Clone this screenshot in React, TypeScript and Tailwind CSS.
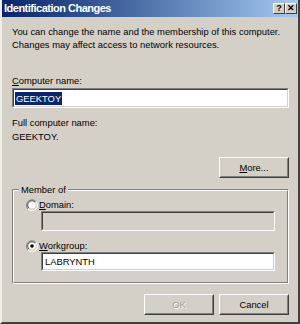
import type { ReactNode } from "react";

const font = { fontFamily: '"Liberation Sans", Arial, sans-serif' };

function Sunken({ children, disabled, className }: { children?: ReactNode; disabled?: boolean; className?: string }) {
  return (
    <div className={`border border-t-[#808080] border-l-[#808080] border-b-white border-r-white ${className ?? ""}`}>
      <div
        className={`h-full border border-t-[#404040] border-l-[#404040] border-b-[#d4d0c8] border-r-[#d4d0c8] flex items-center ${
          disabled ? "bg-[#d4d0c8]" : "bg-white"
        }`}
      >
        {children}
      </div>
    </div>
  );
}

function Button({ children, disabled }: { children: ReactNode; disabled?: boolean }) {
  return (
    <div className="w-[70px] h-[21px] border border-t-white border-l-white border-b-[#404040] border-r-[#404040]">
      <div
        className={`h-full border border-t-[#d4d0c8] border-l-[#d4d0c8] border-b-[#808080] border-r-[#808080] flex items-center justify-center ${
          disabled ? "text-[#a09e96] [text-shadow:1px_1px_0_#fff]" : "text-black"
        }`}
      >
        {children}
      </div>
    </div>
  );
}

function Radio({ checked }: { checked?: boolean }) {
  return (
    <svg width="12" height="12" viewBox="0 0 12 12">
      <path d="M10 2.5A5 5 0 0 0 2 10" fill="none" stroke="#808080" strokeWidth="1" />
      <path d="M9 3.2A4 4 0 0 0 3 9" fill="none" stroke="#404040" strokeWidth="1" />
      <path d="M2 10A5 5 0 0 0 10 2.5" fill="none" stroke="#ffffff" strokeWidth="1" />
      <circle cx="6" cy="6" r="3.6" fill="#ffffff" />
      {checked && <circle cx="6" cy="6" r="1.8" fill="#000000" />}
    </svg>
  );
}

function TitleButton({ children }: { children: ReactNode }) {
  return (
    <div className="w-[12px] h-[11px] bg-[#d4d0c8] border border-t-white border-l-white border-b-[#404040] border-r-[#404040] flex items-center justify-center text-[9px] font-bold leading-none text-black">
      {children}
    </div>
  );
}

export default function App() {
  return (
    <div
      className="w-[300px] h-[324px] bg-[#d4d0c8] flex flex-col border-l-2 border-l-[#f0eee8] border-r-2 border-r-[#404040] border-b-2 border-b-[#404040] text-black"
      style={font}
    >
      {/* title bar */}
      <div className="h-[17px] flex items-center justify-between pl-[2px] pr-[1px] bg-gradient-to-r from-[#0a246a] to-[#a6caf0]">
        <span className="text-white text-[11px] font-bold tracking-[-0.5px] leading-none">Identification Changes</span>
        <div className="flex">
          <TitleButton>?</TitleButton>
          <TitleButton>✕</TitleButton>
        </div>
      </div>

      <div className="flex flex-col pl-[10px] pr-[9px] text-[9.4px] leading-[13px]">
        <p className="mt-[8px]">
          You can change the name and the membership of this computer.
          <br />
          Changes may affect access to network resources.
        </p>

        <p className="mt-[23px]">
          <u>C</u>omputer name:
        </p>
        <Sunken className="mt-[1px] h-[20px]">
          <span className="ml-[1px] px-[1px] bg-[#0a246a] text-white leading-[13px]">GEEKTOY</span>
        </Sunken>

        <p className="mt-[8px]">Full computer name:</p>
        <p className="mt-[1px]">GEEKTOY.</p>

        <div className="flex justify-end mt-[14px]">
          <Button>
            <span>
              <u>M</u>ore...
            </span>
          </Button>
        </div>

        {/* group box */}
        <div className="relative mt-[11px] h-[95px] border border-t-[#808080] border-l-[#808080] border-b-white border-r-white">
          <div className="h-full border border-t-white border-l-white border-b-[#808080] border-r-[#808080] flex flex-col pl-[12px] pr-[12px]">
            <span className="absolute -top-[7px] left-[6px] px-[2px] bg-[#d4d0c8]">Member of</span>
            <div className="flex items-center gap-[1px] mt-[7px]">
              <Radio />
              <span>
                <u>D</u>omain:
              </span>
            </div>
            <Sunken disabled className="mt-[0px] ml-[15px] h-[20px]" />
            <div className="flex items-center gap-[1px] mt-[8px]">
              <Radio checked />
              <span>
                <u>W</u>orkgroup:
              </span>
            </div>
            <Sunken className="mt-[0px] ml-[15px] h-[19px]">
              <span className="ml-[2px]">LABRYNTH</span>
            </Sunken>
          </div>
        </div>

        <div className="flex justify-end gap-[5px] mt-[10px]">
          <Button disabled>OK</Button>
          <Button>Cancel</Button>
        </div>
      </div>
    </div>
  );
}
